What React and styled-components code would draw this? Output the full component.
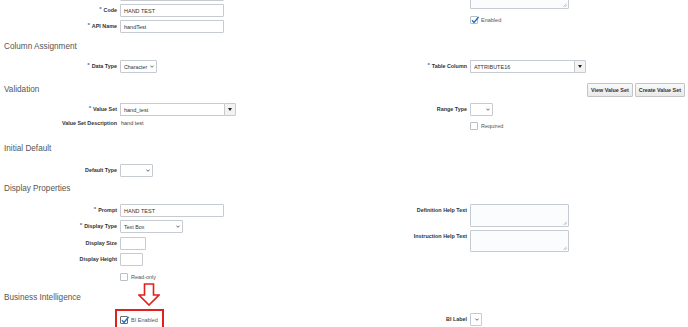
import React from 'react';
import styled, { createGlobalStyle } from 'styled-components';

const GlobalStyle = createGlobalStyle`
	html, body {
		margin: 0;
		padding: 0;
		background: #fff;
	}
	body {
		font-family: "Liberation Sans", Arial, sans-serif;
		color: #333;
		overflow: hidden;
	}
`;

const Page = styled.div`
	width: 688px;
	height: 327px;
	overflow: hidden;
	position: relative;
`;

const Section = styled.section`
	position: relative;
	margin-top: ${props => props.$top}px;
`;

const HeadingRow = styled.div`
	display: flex;
	align-items: center;
	justify-content: space-between;
	height: ${props => props.$h || 12}px;
	padding: 0 3px 0 4px;
`;

const Heading = styled.h2`
	margin: 0;
	font-size: 8.2px;
	font-weight: normal;
	line-height: 12px;
	color: #555;
`;

const Buttons = styled.div`
	display: flex;
	gap: 2px;
`;

const Button = styled.button`
	height: 14px;
	padding: 0 3px;
	border: 1px solid #c4c4c4;
	border-radius: 1px;
	background: linear-gradient(#fafafa, #e9e9e9);
	font-family: "Liberation Sans", Arial, sans-serif;
	font-size: 5.4px;
	font-weight: bold;
	color: #333;
	white-space: nowrap;
`;

const Columns = styled.div`
	display: grid;
	grid-template-columns: 350px 1fr;
	margin-top: ${props => props.$gap || 0}px;
`;

const Stack = styled.div`
	display: flex;
	flex-direction: column;
	gap: ${props => props.$gap ?? 3}px;
`;

const Field = styled.div`
	display: flex;
	align-items: flex-start;
	gap: 3px;
	min-height: ${props => props.$h ?? 13}px;
`;

const Label = styled.label`
	width: 117px;
	flex: none;
	text-align: right;
	font-size: 5.4px;
	font-weight: bold;
	line-height: ${props => props.$lh ?? 13}px;
	color: #333;
	white-space: nowrap;
`;

const Req = styled.span`
	color: #2f6fb5;
	font-size: 6px;
	position: relative;
	top: -1px;
	margin-right: 2px;
`;

const Value = styled.span`
	font-size: 5.5px;
	line-height: ${props => props.$lh ?? 13}px;
	color: #444;
	padding-left: 1px;
`;

const TextInput = styled.input`
	box-sizing: border-box;
	width: ${props => props.$w}px;
	height: 13px;
	margin: 0;
	padding: 0 3px;
	border: 1px solid #c5cbd1;
	border-radius: 1px;
	background: #fff;
	font-family: "Liberation Sans", Arial, sans-serif;
	font-size: 5.5px;
	color: #333;
	outline: none;
`;

const Combo = styled.div`
	display: flex;
	height: 13px;
`;

const ComboInput = styled(TextInput)`
	border-right: none;
	border-radius: 1px 0 0 1px;
`;

const ComboButton = styled.span`
	box-sizing: border-box;
	width: 12px;
	height: 13px;
	display: flex;
	align-items: center;
	justify-content: center;
	border: 1px solid #c5cbd1;
	border-radius: 0 1px 1px 0;
	background: #f3f3f3;
`;

const Select = styled.div`
	box-sizing: border-box;
	width: ${props => props.$w}px;
	height: 13px;
	display: flex;
	align-items: center;
	justify-content: space-between;
	gap: 1px;
	padding: 0 2px 0 3px;
	border: 1px solid #c5cbd1;
	border-radius: 1px;
	background: #fff;
	font-size: 5.3px;
	color: #333;
	white-space: nowrap;
`;

const TextArea = styled.div`
	box-sizing: border-box;
	position: relative;
	width: 99px;
	height: ${props => props.$h}px;
	border: 1px solid #c5cbd1;
	border-radius: 1px;
	background: #fbfcfe;
`;

const Grip = styled.svg`
	position: absolute;
	right: 1px;
	bottom: 1px;
`;

const CheckRow = styled.div`
	display: flex;
	align-items: center;
	gap: 3px;
	height: 13px;
	margin-left: ${props => props.$indent}px;
	margin-top: ${props => props.$mt || 0}px;
`;

const Box = styled.span`
	box-sizing: border-box;
	position: relative;
	width: 8px;
	height: 8px;
	flex: none;
	border: 1px solid ${props => (props.$dark ? '#6b6b6b' : '#b8bfc7')};
	border-radius: 1px;
	background: #fff;
`;

const Tick = styled.svg`
	position: absolute;
	left: 0;
	top: -1px;
`;

const CheckText = styled.span`
	font-size: 5.5px;
	color: #555;
`;

const Highlight = styled.span`
	display: inline-flex;
	align-items: center;
	gap: 3px;
	height: 12px;
	padding-right: 1px;
	outline: 2px solid #e0201c;
	outline-offset: 3px;
`;

const Arrow = styled.svg`
	position: absolute;
	left: 138px;
	top: -9px;
`;

function Chevron() {
	return (
		<svg width="4" height="3" viewBox="0 0 4 3">
			<polyline points="0.4,0.6 2,2.3 3.6,0.6" fill="none" stroke="#444" strokeWidth="0.8" />
		</svg>
	);
}

function Triangle() {
	return (
		<svg width="4" height="3" viewBox="0 0 4 3">
			<polygon points="0,0 4,0 2,3" fill="#222" />
		</svg>
	);
}

function ResizeGrip() {
	return (
		<Grip width="4" height="4" viewBox="0 0 4 4">
			<line x1="0.5" y1="3.8" x2="3.8" y2="0.5" stroke="#888" strokeWidth="0.5" />
			<line x1="2" y1="3.8" x2="3.8" y2="2" stroke="#888" strokeWidth="0.5" />
		</Grip>
	);
}

function Checkbox({ checked, dark }) {
	return (
		<Box $dark={dark}>
			{checked && (
				<Tick width="9" height="8" viewBox="0 0 9 8">
					<polyline points="1,4.2 3,6.4 7.6,1" fill="none" stroke="#1f6fc5" strokeWidth="1.4" />
				</Tick>
			)}
		</Box>
	);
}

function FormField({ label, required, children, lh }) {
	return (
		<Field>
			<Label $lh={lh}>
				{required && <Req>*</Req>}
				{label}
			</Label>
			{children}
		</Field>
	);
}

function ComboBox({ value }) {
	return (
		<Combo>
			<ComboInput $w={104} value={value} readOnly />
			<ComboButton>
				<Triangle />
			</ComboButton>
		</Combo>
	);
}

function SelectBox({ width, value }) {
	return (
		<Select $w={width}>
			<span>{value}</span>
			<Chevron />
		</Select>
	);
}

export default function App() {
	return (
		<Page>
			<GlobalStyle />

			<Section $top={-12}>
				<Columns>
					<Stack>
						<Field>
							<Label />
							<TextInput $w={104} value="" readOnly />
						</Field>
						<FormField label="Code" required>
							<TextInput $w={104} value="HAND TEST" readOnly />
						</FormField>
						<FormField label="API Name" required>
							<TextInput $w={104} value="handTest" readOnly />
						</FormField>
					</Stack>
					<Stack $gap={4}>
						<Field>
							<Label />
							<TextArea $h={21}>
								<ResizeGrip />
							</TextArea>
						</Field>
						<CheckRow $indent={120}>
							<Checkbox checked />
							<CheckText>Enabled</CheckText>
						</CheckRow>
					</Stack>
				</Columns>
			</Section>

			<Section $top={8}>
				<HeadingRow>
					<Heading>Column Assignment</Heading>
				</HeadingRow>
				<Columns $gap={7}>
					<Stack>
						<FormField label="Data Type" required>
							<SelectBox width={37} value="Character" />
						</FormField>
					</Stack>
					<Stack>
						<FormField label="Table Column" required>
							<ComboBox value="ATTRIBUTE16" />
						</FormField>
					</Stack>
				</Columns>
			</Section>

			<Section $top={10}>
				<HeadingRow $h={14}>
					<Heading>Validation</Heading>
					<Buttons>
						<Button>View Value Set</Button>
						<Button>Create Value Set</Button>
					</Buttons>
				</HeadingRow>
				<Columns $gap={6}>
					<Stack $gap={2}>
						<FormField label="Value Set" required>
							<ComboBox value="hand_test" />
						</FormField>
						<FormField label="Value Set Description" lh={10}>
							<Value $lh={10}>hand test</Value>
						</FormField>
					</Stack>
					<Stack>
						<FormField label="Range Type">
							<SelectBox width={23} value="" />
						</FormField>
						<CheckRow $indent={120}>
							<Checkbox />
							<CheckText>Required</CheckText>
						</CheckRow>
					</Stack>
				</Columns>
			</Section>

			<Section $top={11}>
				<HeadingRow>
					<Heading>Initial Default</Heading>
				</HeadingRow>
				<Columns $gap={9}>
					<Stack>
						<FormField label="Default Type">
							<SelectBox width={33} value="" />
						</FormField>
					</Stack>
					<Stack />
				</Columns>
			</Section>

			<Section $top={6}>
				<HeadingRow>
					<Heading>Display Properties</Heading>
				</HeadingRow>
				<Columns $gap={9}>
					<Stack $gap={3.33}>
						<FormField label="Prompt" required>
							<TextInput $w={104} value="HAND TEST" readOnly />
						</FormField>
						<FormField label="Display Type" required>
							<SelectBox width={63} value="Text Box" />
						</FormField>
						<FormField label="Display Size">
							<TextInput $w={26} value="" readOnly />
						</FormField>
						<FormField label="Display Height">
							<TextInput $w={23} value="" readOnly />
						</FormField>
						<CheckRow $indent={120} $mt={1}>
							<Checkbox />
							<CheckText>Read-only</CheckText>
						</CheckRow>
					</Stack>
					<Stack>
						<FormField label="Definition Help Text">
							<TextArea $h={23}>
								<ResizeGrip />
							</TextArea>
						</FormField>
						<FormField label="Instruction Help Text">
							<TextArea $h={22}>
								<ResizeGrip />
							</TextArea>
						</FormField>
					</Stack>
				</Columns>
			</Section>

			<Section $top={9}>
				<Arrow width="22" height="23" viewBox="0 0 22 23">
					<polygon
						points="6.5,1 15.5,1 15.5,12 21,12 11,22 1,12 6.5,12"
						fill="#fff"
						stroke="#e0201c"
						strokeWidth="1.6"
						strokeLinejoin="miter"
					/>
				</Arrow>
				<HeadingRow>
					<Heading>Business Intelligence</Heading>
				</HeadingRow>
				<Columns $gap={9}>
					<Stack>
						<CheckRow $indent={120}>
							<Highlight>
								<Checkbox checked dark />
								<CheckText>BI Enabled</CheckText>
							</Highlight>
						</CheckRow>
					</Stack>
					<Stack>
						<FormField label="BI Label">
							<SelectBox width={12} value="" />
						</FormField>
					</Stack>
				</Columns>
			</Section>
		</Page>
	);
}
